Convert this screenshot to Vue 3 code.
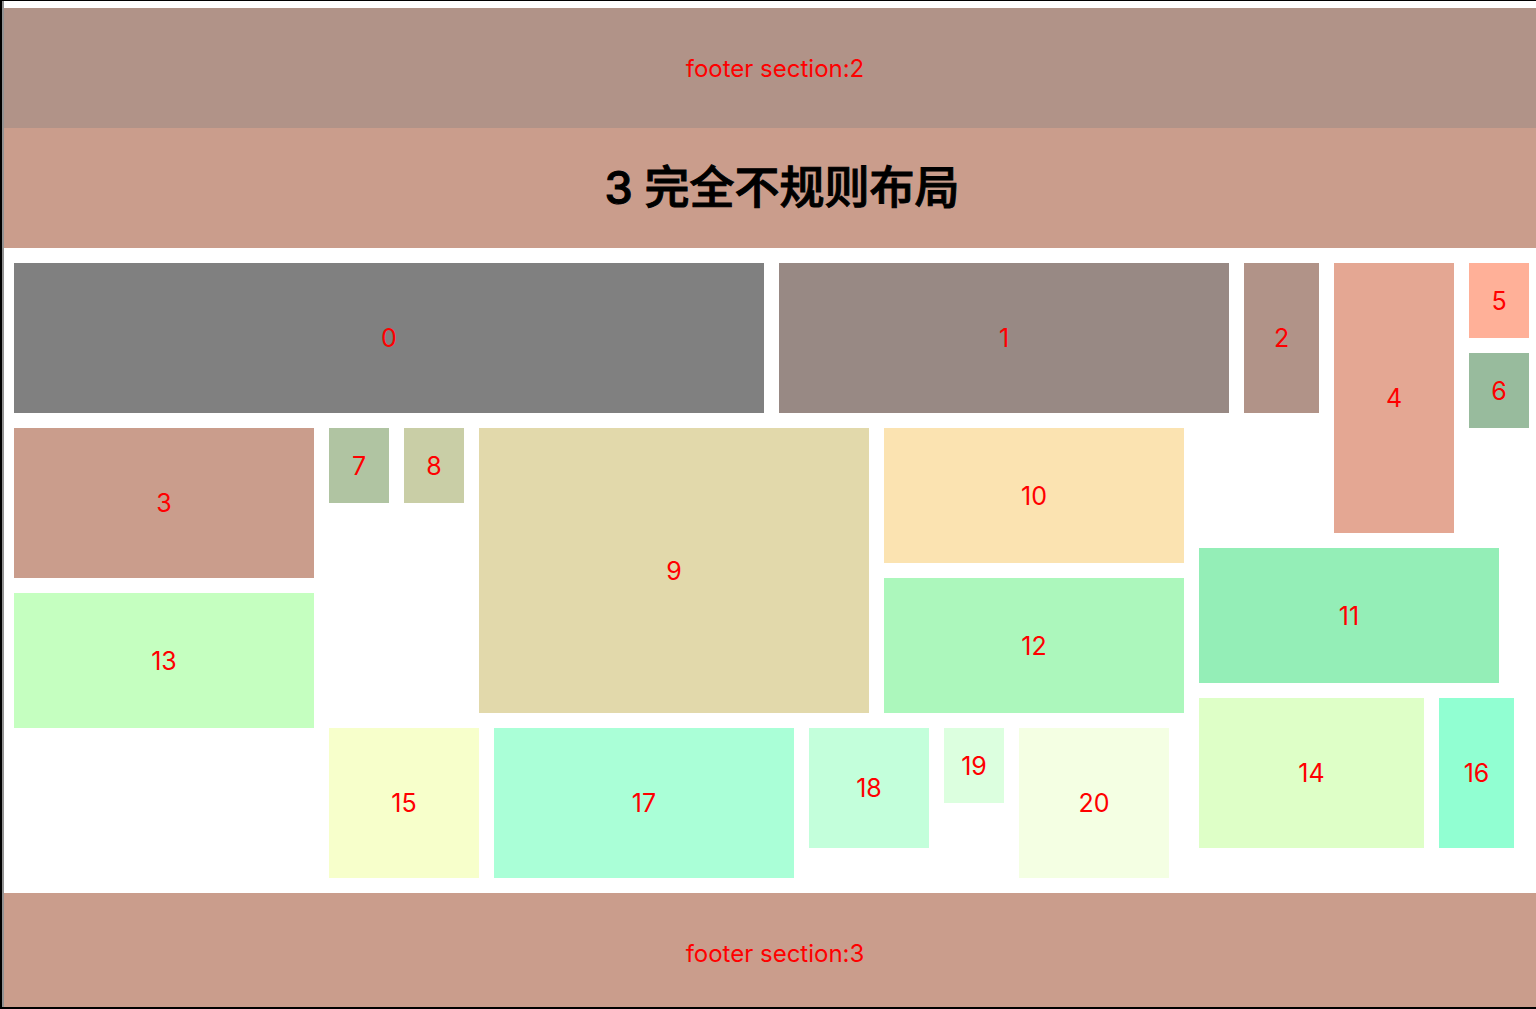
<script setup>
// Column, row, width and height are counted in grid tracks, starting at 0.
const tiles = [
  { col: 0, row: 0, w: 50, h: 10, color: '#808080' },
  { col: 51, row: 0, w: 30, h: 10, color: '#988984' },
  { col: 82, row: 0, w: 5, h: 10, color: '#b19388' },
  { col: 0, row: 11, w: 20, h: 10, color: '#ca9d8c' },
  { col: 88, row: 0, w: 8, h: 18, color: '#e4a793' },
  { col: 97, row: 0, w: 4, h: 5, color: '#ffb098' },
  { col: 97, row: 6, w: 4, h: 5, color: '#98bb9d' },
  { col: 21, row: 11, w: 4, h: 5, color: '#b0c4a2' },
  { col: 26, row: 11, w: 4, h: 5, color: '#c9cea6' },
  { col: 31, row: 11, w: 26, h: 19, color: '#e2d9ab' },
  { col: 58, row: 11, w: 20, h: 9, color: '#fbe3b1' },
  { col: 79, row: 19, w: 20, h: 9, color: '#94eeb7' },
  { col: 58, row: 21, w: 20, h: 9, color: '#acf7bc' },
  { col: 0, row: 22, w: 20, h: 9, color: '#c5ffc0' },
  { col: 79, row: 29, w: 15, h: 10, color: '#deffc7' },
  { col: 21, row: 31, w: 10, h: 10, color: '#f7ffcb' },
  { col: 95, row: 29, w: 5, h: 10, color: '#91ffd2' },
  { col: 32, row: 31, w: 20, h: 10, color: '#aaffd7' },
  { col: 53, row: 31, w: 8, h: 8, color: '#c3ffdb' },
  { col: 62, row: 31, w: 4, h: 5, color: '#dcffdf' },
  { col: 67, row: 31, w: 10, h: 10, color: '#f4ffe3' },
]

const place = (t) => ({
  gridColumn: `${t.col + 1} / span ${t.w}`,
  gridRow: `${t.row + 1} / span ${t.h}`,
  backgroundColor: t.color,
})
</script>

<template>
  <div class="device">
    <main class="screen">
      <footer class="band band-two">footer section:2</footer>
      <header class="band band-three">
        <h1 class="title">3 完全不规则布局</h1>
      </header>
      <section class="mosaic">
        <div v-for="(tile, i) in tiles" :key="i" class="tile" :style="place(tile)">{{ i }}</div>
      </section>
      <footer class="band band-three">footer section:3</footer>
    </main>
  </div>
</template>

<style>
body {
  margin: 0;
}
</style>

<style scoped>
.device {
  box-sizing: border-box;
  height: 100vh;
  overflow: hidden;
  border: solid #000;
  border-width: 1px 0 2px 2px;
  background: #fff;
}

.screen {
  box-sizing: border-box;
  height: 100%;
  padding-top: 7px;
  overflow: hidden;
  border-left: 2px solid #929292;
  color: #f00;
  font-family: Inter, "Noto Sans CJK SC", sans-serif;
  font-size: 25px;
}

.band {
  display: flex;
  align-items: center;
  justify-content: center;
  box-sizing: border-box;
  height: 120px;
  padding-left: 10px;
  font-size: 24px;
}

.band-two {
  background: #b19388;
}

.band-three {
  background: #ca9d8c;
}

.title {
  margin: 0;
  padding-left: 14px;
  color: #000;
  font-size: 45px;
  font-weight: 500;
  line-height: 60px;
  -webkit-text-stroke: 1px #000;
}

.mosaic {
  display: grid;
  grid-template-columns: repeat(101, minmax(0, 1fr));
  grid-template-rows: repeat(41, 15px);
  padding: 15px 7px 15px 10px;
}

.tile {
  display: flex;
  align-items: center;
  justify-content: center;
}
</style>
